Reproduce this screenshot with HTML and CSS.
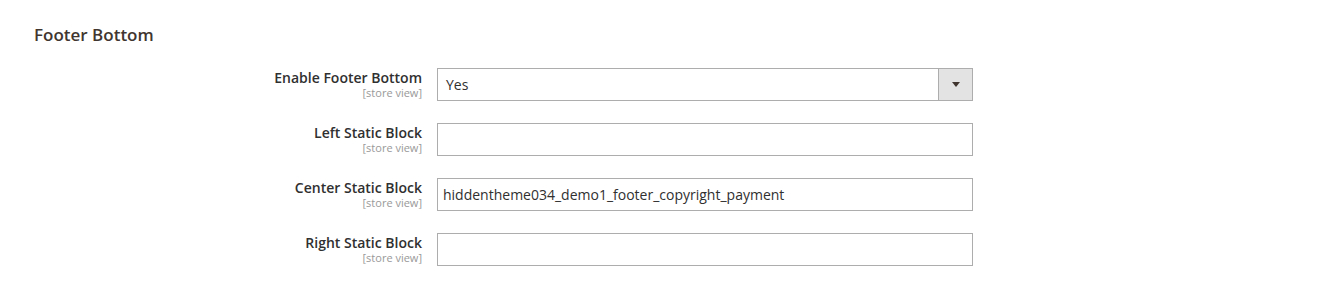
FILE: index.html
```html
<!DOCTYPE html>
<html lang="en">
<head>
    <meta charset="UTF-8">
    <title>Footer Bottom</title>
    <link rel="stylesheet" href="styles.css">
</head>
<body>
    <div class="section">
        <div class="section-title">Footer Bottom</div>
        <div class="fields">
            <div class="field">
                <div class="label">
                    <span class="label-text">Enable Footer Bottom</span>
                    <span class="scope">[store view]</span>
                </div>
                <div class="control">
                    <div class="select">
                        <span class="select-value">Yes</span>
                        <span class="select-arrow"><span class="caret"></span></span>
                    </div>
                </div>
            </div>
            <div class="field">
                <div class="label">
                    <span class="label-text">Left Static Block</span>
                    <span class="scope">[store view]</span>
                </div>
                <div class="control">
                    <input type="text" class="input" value="">
                </div>
            </div>
            <div class="field">
                <div class="label">
                    <span class="label-text">Center Static Block</span>
                    <span class="scope">[store view]</span>
                </div>
                <div class="control">
                    <input type="text" class="input" value="hiddentheme034_demo1_footer_copyright_payment">
                </div>
            </div>
            <div class="field">
                <div class="label">
                    <span class="label-text">Right Static Block</span>
                    <span class="scope">[store view]</span>
                </div>
                <div class="control">
                    <input type="text" class="input" value="">
                </div>
            </div>
        </div>
    </div>
</body>
</html>
```

FILE: styles.css
```css
body {
    margin: 0;
    background: #ffffff;
    font-family: 'Open Sans', 'Liberation Sans', sans-serif;
    color: #303030;
}

.section {
    padding: 24px 0 0 34px;
}

.section-title {
    font-size: 17px;
    font-weight: 600;
    color: #41362f;
    line-height: 22px;
}

.fields {
    margin-top: 22px;
    display: flex;
    flex-direction: column;
    gap: 22px;
}

.field {
    display: grid;
    grid-template-columns: 388px 536px;
    column-gap: 15px;
}

.label {
    display: flex;
    flex-direction: column;
    align-items: flex-end;
    padding-top: 1px;
}

.label-text {
    font-size: 14px;
    font-weight: 600;
    color: #303030;
    line-height: 18px;
}

.scope {
    font-size: 11px;
    color: #999999;
    line-height: 12px;
}

.input,
.select {
    box-sizing: border-box;
    width: 536px;
    height: 33px;
    border: 1px solid #adadad;
    background: #ffffff;
    font-family: 'Open Sans', 'Liberation Sans', sans-serif;
    font-size: 14px;
    color: #303030;
    padding: 0 8px 0 5px;
    margin: 0;
    outline: none;
}

.select {
    display: flex;
    align-items: center;
    padding: 0 0 0 8px;
}

.select-value {
    flex: 1;
}

.select-arrow {
    width: 33px;
    height: 31px;
    border-left: 1px solid #adadad;
    background: #e3e3e3;
    display: flex;
    align-items: center;
    justify-content: center;
}

.caret {
    width: 0;
    height: 0;
    border-left: 4px solid transparent;
    border-right: 4px solid transparent;
    border-top: 5px solid #41362f;
}
```
